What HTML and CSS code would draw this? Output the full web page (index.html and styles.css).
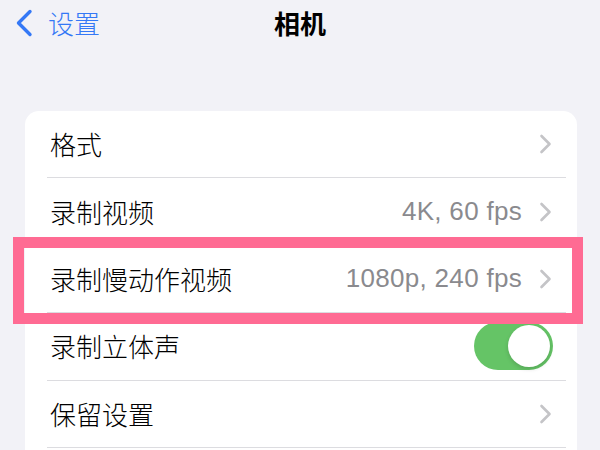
FILE: index.html
```html
<!DOCTYPE html>
<html lang="zh-CN">
<head>
<meta charset="utf-8">
<title>相机</title>
<link rel="stylesheet" href="styles.css">
</head>
<body>
<div class="screen">
  <header class="nav">
    <div class="back">
      <svg class="back-icon" width="20" height="28" viewBox="0 0 20 28"><path d="M16 2.5 L4.5 14 L16 25.5" fill="none" stroke="#3478f6" stroke-width="3.4" stroke-linecap="round" stroke-linejoin="round"/></svg>
      <span class="back-text">设置</span>
    </div>
    <div class="title">相机</div>
  </header>

  <section class="card">
    <div class="row">
      <span class="label">格式</span>
      <span class="right"><svg class="chev" width="13" height="20" viewBox="0 0 13 20"><path d="M2.5 2 L10.5 10 L2.5 18" fill="none" stroke="#c4c4c7" stroke-width="2.6" stroke-linecap="round" stroke-linejoin="round"/></svg></span>
    </div>
    <div class="row">
      <span class="label">录制视频</span>
      <span class="right"><span class="value">4K, 60 fps</span><svg class="chev" width="13" height="20" viewBox="0 0 13 20"><path d="M2.5 2 L10.5 10 L2.5 18" fill="none" stroke="#c4c4c7" stroke-width="2.6" stroke-linecap="round" stroke-linejoin="round"/></svg></span>
    </div>
    <div class="row">
      <span class="label">录制慢动作视频</span>
      <span class="right"><span class="value">1080p, 240 fps</span><svg class="chev" width="13" height="20" viewBox="0 0 13 20"><path d="M2.5 2 L10.5 10 L2.5 18" fill="none" stroke="#c4c4c7" stroke-width="2.6" stroke-linecap="round" stroke-linejoin="round"/></svg></span>
    </div>
    <div class="row">
      <span class="label">录制立体声</span>
      <span class="right"><span class="toggle"><span class="knob"></span></span></span>
    </div>
    <div class="row">
      <span class="label">保留设置</span>
      <span class="right"><svg class="chev" width="13" height="20" viewBox="0 0 13 20"><path d="M2.5 2 L10.5 10 L2.5 18" fill="none" stroke="#c4c4c7" stroke-width="2.6" stroke-linecap="round" stroke-linejoin="round"/></svg></span>
    </div>
  </section>

  <div class="highlight"></div>
</div>
</body>
</html>
```

FILE: styles.css
```css
* { box-sizing: border-box; }
html, body {
  margin: 0;
  padding: 0;
  width: 600px;
  height: 450px;
  overflow: hidden;
  background: #f2f2f7;
}
.screen {
  position: relative;
  width: 600px;
  height: 450px;
  overflow: hidden;
  font-family: "Noto Sans CJK SC", "Liberation Sans", sans-serif;
}
.nav {
  position: relative;
  height: 46px;
  display: flex;
  align-items: center;
  justify-content: center;
}
.back {
  position: absolute;
  left: 14px;
  top: 8px;
  display: flex;
  align-items: center;
  gap: 14px;
}
.back-icon { display: block; }
.back-text {
  font-size: 26px;
  line-height: 30px;
  font-weight: 300;
  color: #3478f6;
}
.title {
  font-size: 26px;
  line-height: 30px;
  font-weight: 700;
  color: #000;
}
.card {
  margin: 65px 23px 0 25px;
  background: #fff;
  border-radius: 14px;
  padding-left: 22px;
  padding-bottom: 40px;
}
.row {
  height: 67.4px;
  display: flex;
  align-items: center;
  justify-content: space-between;
  padding-left: 3px;
  padding-right: 14px;
  margin-right: 11px;
  border-bottom: 1px solid #dcdce0;
}
.label {
  font-size: 26px;
  font-weight: 300;
  color: #000;
  line-height: 30px;
}
.right {
  display: flex;
  align-items: center;
}
.value {
  font-family: "Liberation Sans", "Noto Sans CJK SC", sans-serif;
  font-size: 26px;
  letter-spacing: 0.3px;
  color: #8a8a8e;
  margin-right: 17px;
}
.chev { display: block; }
.toggle {
  width: 79px;
  height: 48px;
  border-radius: 24px;
  background: #65c466;
  position: relative;
  margin-right: -1px;
  display: block;
}
.knob {
  position: absolute;
  right: 3px;
  top: 3px;
  width: 42px;
  height: 42px;
  border-radius: 50%;
  background: #fff;
  box-shadow: 0 2px 4px rgba(0,0,0,0.15);
}
.highlight {
  position: absolute;
  left: 13px;
  top: 237px;
  width: 570px;
  height: 87px;
  border: 11px solid #ff6b93;
}
```
